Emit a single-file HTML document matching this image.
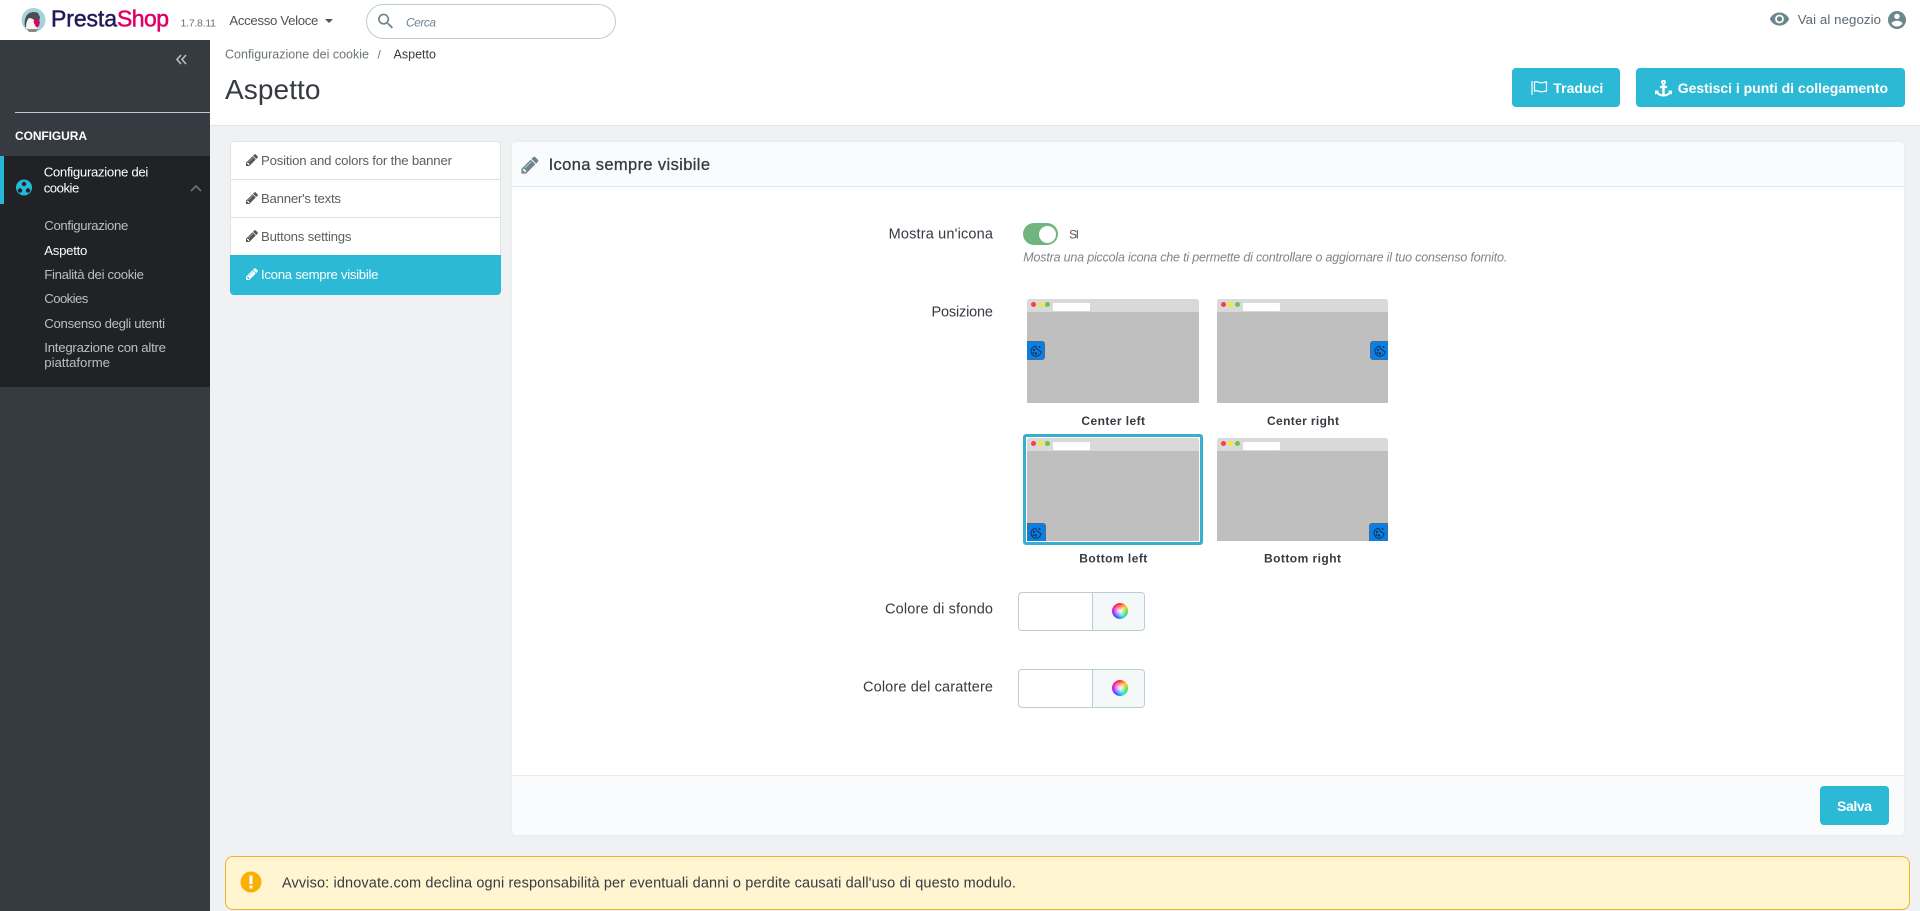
<!DOCTYPE html>
<html lang="it">
<head>
<meta charset="utf-8">
<title>Aspetto • PrestaShop</title>
<style>
html,body{margin:0;padding:0;width:1920px;height:911px;overflow:hidden;background:#eff1f2;font-family:"Liberation Sans",sans-serif}
.b{position:absolute;box-sizing:border-box}
svg.ov{position:absolute;left:0;top:0;width:1920px;height:911px}
svg.ov text{font-family:"Liberation Sans",sans-serif;font-size:13.2px;fill:#363a41}
.sb{font-weight:700}
.wheel{border-radius:50%;background:radial-gradient(circle,rgba(255,255,255,.95) 0,rgba(255,255,255,.55) 30%,rgba(255,255,255,0) 62%),conic-gradient(#ff2d2d,#ffc21a,#49e049,#1fe0d8,#2a5cff,#a51fff,#ff1f8c,#ff2d2d)}
.shot{position:absolute;background:#bfbfbf;border-radius:3px 3px 0 0;overflow:hidden}
.shot .bar{position:absolute;left:0;top:0;right:0;height:13px;background:#d9d9d9}
.shot .tab{position:absolute;left:26px;top:4px;width:37px;height:8px;background:#fff;border-radius:1px}
.shot .dot{position:absolute;top:3px;width:5px;height:5px;border-radius:50%}
.shot .ck{position:absolute;width:19px;height:19px;background:#0a7fe6;border:1px solid #4a6a88;box-sizing:border-box}
</style>
</head>
<body>
<!-- header -->
<div class="b" style="left:0;top:0;width:1920px;height:40px;background:#fff"></div>
<div class="b" style="left:210px;top:40px;width:1710px;height:86px;background:#fff;border-bottom:1px solid #e4e6e8"></div>
<div class="b" style="left:366px;top:4px;width:250px;height:35px;border:1px solid #bbcdd2;border-radius:18px;background:#fff"></div>
<!-- sidebar -->
<div class="b" style="left:0;top:40px;width:210px;height:871px;background:#363a41"></div>
<div class="b" style="left:15px;top:112px;width:195px;height:1px;background:#bbcdd2"></div>
<div class="b" style="left:0;top:156px;width:210px;height:231px;background:#202226"></div>
<div class="b" style="left:0;top:156px;width:4px;height:48px;background:#25b9d7"></div>
<!-- buttons -->
<div class="b" style="left:1512px;top:68px;width:108px;height:39px;background:#2cb9d6;border-radius:4px"></div>
<div class="b" style="left:1636px;top:68px;width:269px;height:39px;background:#2cb9d6;border-radius:4px"></div>
<!-- list -->
<div class="b" style="left:230px;top:141px;width:271px;height:154px;background:#fff;border:1px solid #e2e5e7;border-radius:4px;overflow:hidden">
  <div class="b" style="left:0;top:37px;width:100%;height:1px;background:#dcdfe1"></div>
  <div class="b" style="left:0;top:75px;width:100%;height:1px;background:#dcdfe1"></div>
</div>
<div class="b" style="left:230px;top:255px;width:271px;height:40px;background:#2cb9d6;border-radius:0 0 4px 4px"></div>
<!-- panel -->
<div class="b" style="left:512px;top:142px;width:1392px;height:693px;background:#fff;border-radius:4px;box-shadow:0 0 2px rgba(190,205,210,.35)"></div>
<div class="b" style="left:512px;top:142px;width:1392px;height:45px;background:#fafbfc;border-bottom:1px solid #dfe8ec;border-radius:4px 4px 0 0"></div>
<div class="b" style="left:512px;top:775px;width:1392px;height:60px;background:#fafbfc;border-top:1px solid #e6eaec;border-radius:0 0 4px 4px"></div>
<div class="b" style="left:1820px;top:786px;width:69px;height:39px;background:#2cb9d6;border-radius:4px"></div>
<!-- switch -->
<div class="b" style="left:1023px;top:223px;width:35px;height:22px;border-radius:11px;background:#70b580"></div>
<div class="b" style="left:1039px;top:225.500px;width:17px;height:17px;border-radius:50%;background:#fff"></div>
<!-- thumbs -->
<div class="shot" style="left:1027px;top:299px;width:172px;height:104px"><div class="bar"></div><div class="dot" style="left:4px;background:#f4414a"></div><div class="dot" style="left:11px;background:#f5e82e"></div><div class="dot" style="left:18px;background:#6cc644"></div><div class="tab"></div><div class="ck" style="left:-1px;top:42px;border-radius:0 3px 3px 0"></div></div>
<div class="shot" style="left:1217px;top:299px;width:171px;height:104px"><div class="bar"></div><div class="dot" style="left:4px;background:#f4414a"></div><div class="dot" style="left:11px;background:#f5e82e"></div><div class="dot" style="left:18px;background:#6cc644"></div><div class="tab"></div><div class="ck" style="right:-1px;top:42px;border-radius:3px 0 0 3px"></div></div>
<div class="b" style="left:1023px;top:434px;width:180px;height:111px;border:3px solid #38afcf;border-radius:3px"><div style="position:absolute;inset:0;border:1px solid #fff"></div></div>
<div class="shot" style="left:1027px;top:438px;width:172px;height:103px"><div class="bar"></div><div class="dot" style="left:4px;background:#f4414a"></div><div class="dot" style="left:11px;background:#f5e82e"></div><div class="dot" style="left:18px;background:#6cc644"></div><div class="tab"></div><div class="ck" style="left:0;bottom:-1px;border-radius:0 3px 0 0"></div></div>
<div class="shot" style="left:1217px;top:438px;width:171px;height:103px"><div class="bar"></div><div class="dot" style="left:4px;background:#f4414a"></div><div class="dot" style="left:11px;background:#f5e82e"></div><div class="dot" style="left:18px;background:#6cc644"></div><div class="tab"></div><div class="ck" style="right:0;bottom:-1px;border-radius:3px 0 0 0"></div></div>
<!-- colour inputs -->
<div class="b" style="left:1018px;top:592px;width:127px;height:39px;border:1px solid #bbcdd2;border-radius:4px;background:#fff;overflow:hidden"><div class="b" style="left:73px;top:0;bottom:0;right:0;background:#f4f8f9;border-left:1px solid #bbcdd2"></div></div>
<div class="b wheel" style="left:1112px;top:603px;width:16px;height:16px"></div>
<div class="b" style="left:1018px;top:669px;width:127px;height:39px;border:1px solid #bbcdd2;border-radius:4px;background:#fff;overflow:hidden"><div class="b" style="left:73px;top:0;bottom:0;right:0;background:#f4f8f9;border-left:1px solid #bbcdd2"></div></div>
<div class="b wheel" style="left:1112px;top:680px;width:16px;height:16px"></div>
<!-- warning -->
<div class="b" style="left:225px;top:856px;width:1685px;height:54px;background:#fff5d1;border:1px solid #f9ae27;border-radius:8px"></div>

<svg class="ov" viewBox="0 0 1920 911" xmlns="http://www.w3.org/2000/svg">
<defs>
<path id="pen" d="M491 1536l91-91-235-235-91 91v107h128v128h107zm523-928q0-22-22-22-10 0-17 7l-542 542q-7 7-7 17 0 22 22 22 10 0 17-7l542-542q7-7 7-17zm-54-192l416 416-832 832h-416v-416zm683 96q0 53-37 90l-166 166-416-416 166-165q36-38 90-38 53 0 91 38l235 234q37 39 37 91z"/>
<g id="ck" fill="none" stroke="#12365a" stroke-width="1"><path d="M6 1.200a5 5 0 1 0 5 5.200c-1.400.2-2.200-.6-2.300-1.700-1.300 0-2.500-1.200-2.700-3.500z"/><circle cx="4" cy="5" r=".7" fill="#12365a"/><circle cx="6" cy="8.500" r=".7" fill="#12365a"/><circle cx="3.500" cy="8" r=".5" fill="#12365a"/><circle cx="9.500" cy="2" r=".5" fill="#12365a"/></g>
</defs>

<!-- logo -->
<circle cx="33.500" cy="20" r="12" fill="#a3d4dc"/>
<path d="M25 27c-1-5 0-9 2-12 2-3 8-4 11-2l2 4-2 10z" fill="#4a4d52"/>
<path d="M26 28c0-5 1-8 3-10 3 0 6 2 7 5l1 6-6 1z" fill="#f4f4f2"/>
<path d="M35 18l5 4-1 4-3 1-2.500-5z" fill="#df0067"/>
<path d="M27 29h11l-2 3h-7z" fill="#8f8a7e"/>
<text x="51" y="26.500" textLength="66" style="font-size:23px;fill:#251b5b;stroke:#251b5b;stroke-width:.5">Presta</text>
<text x="117" y="26.500" textLength="52" style="font-size:23px;fill:#df0067;stroke:#df0067;stroke-width:.5">Shop</text>
<text x="180.500" y="26.500" textLength="35.500" style="font-size:10.500px;fill:#6c6f73">1.7.8.11</text>
<text x="229.400" y="25" textLength="89" style="fill:#4e5357">Accesso Veloce</text>
<path d="M325 19h8l-4 4z" fill="#4e5357"/>
<svg x="375.500" y="11" width="20.500" height="20.500" viewBox="0 0 24 24"><path fill="#6c868e" d="M15.500 14h-.79l-.28-.27C15.410 12.590 16 11.110 16 9.500 16 5.910 13.090 3 9.500 3S3 5.910 3 9.500 5.910 16 9.500 16c1.610 0 3.090-.59 4.230-1.570l.27.28v.79l5 4.990L20.490 19l-4.990-5zm-6 0C7.010 14 5 11.990 5 9.500S7.010 5 9.500 5 14 7.010 14 9.500 11.990 14 9.500 14z"/></svg>
<text x="406" y="26.500" textLength="30" style="font-size:12px;font-style:italic;fill:#6c868e">Cerca</text>

<!-- header right -->
<svg x="1769" y="8" width="21" height="22" viewBox="0 0 24 24"><path fill="#6c868e" d="M12 4.500C7 4.500 2.730 7.610 1 12c1.730 4.390 6 7.500 11 7.500s9.270-3.110 11-7.500c-1.730-4.390-6-7.500-11-7.500zM12 17c-2.760 0-5-2.240-5-5s2.240-5 5-5 5 2.240 5 5-2.240 5-5 5zm0-8c-1.660 0-3 1.340-3 3s1.340 3 3 3 3-1.340 3-3-1.340-3-3-3z"/></svg>
<text x="1797.700" y="24" textLength="83.300" style="fill:#5b6770">Vai al negozio</text>
<svg x="1886.200" y="9.200" width="21.600" height="21.600" viewBox="0 0 24 24"><path fill="#6c868e" d="M12 2C6.480 2 2 6.480 2 12s4.480 10 10 10 10-4.480 10-10S17.520 2 12 2zm0 3c1.660 0 3 1.340 3 3s-1.340 3-3 3-3-1.340-3-3 1.340-3 3-3zm0 14.200c-2.500 0-4.710-1.280-6-3.220.03-1.990 4-3.080 6-3.080 1.990 0 5.970 1.090 6 3.080-1.290 1.940-3.500 3.220-6 3.220z"/></svg>

<!-- breadcrumb/title -->
<text x="225" y="58.500" textLength="144" style="font-size:12.500px;fill:#6c7478">Configurazione dei cookie</text>
<text x="377.500" y="58.500" style="font-size:12px;fill:#6c7478">/</text>
<text x="393.500" y="58.500" textLength="42.500" style="font-size:12.500px;fill:#363a41">Aspetto</text>
<text x="225" y="99" textLength="95.500" style="font-size:28px;fill:#363a41">Aspetto</text>

<!-- action buttons -->
<path d="M1532 81v14M1534.500 82c3-1 4 .8 6.500.8s3-.8 5.500-.8v9c-2.500 0-3 .8-5.500.8s-3.500-1.800-6.500-.8z" fill="none" stroke="#fff" stroke-width="1.200"/>
<text x="1553.300" y="93" textLength="50" class="sb" style="font-size:14px;fill:#fff">Traduci</text>
<svg x="1655" y="80" width="17" height="17" viewBox="0 0 1792 1792"><path fill="#fff" d="M960 256q0-26-19-45t-45-19-45 19-19 45 19 45 45 19 45-19 19-45zm832 890v352q0 22-20 30-8 2-12 2-12 0-23-9l-93-93q-119 143-318.500 226.500t-429.500 83.500-429.500-83.500-318.500-226.500l-93 93q-9 9-23 9-4 0-12-2-20-8-20-30v-352q0-14 9-23t23-9h352q22 0 30 20 8 19-7 35l-100 100q67 91 189.500 153.500t271.500 82.500v-647h-192q-26 0-45-19t-19-45v-128q0-26 19-45t45-19h192v-163q-58-34-93-92.500t-35-128.500q0-106 75-181t181-75 181 75 75 181q0 70-35 128.500t-93 92.500v163h192q26 0 45 19t19 45v128q0 26-19 45t-45 19h-192v647q149-20 271.500-82.500t189.500-153.500l-100-100q-15-16-7-35 8-20 30-20h352q14 0 23 9t9 23z"/></svg>
<text x="1677.700" y="93" textLength="210.300" class="sb" style="font-size:14px;fill:#fff">Gestisci i punti di collegamento</text>

<!-- sidebar -->
<path d="M181 55l-4 4.500 4 4.500M186 55l-4 4.500 4 4.500" fill="none" stroke="#bebebe" stroke-width="1.600"/>
<text x="15" y="140" textLength="72" class="sb" style="font-size:12px;fill:#fff">CONFIGURA</text>
<circle cx="24" cy="187.500" r="8" fill="#25b9d7"/>
<circle cx="24" cy="184" r="2.200" fill="#202226"/><circle cx="20" cy="190.500" r="2.200" fill="#202226"/><circle cx="28" cy="190.500" r="2.200" fill="#202226"/>
<text x="43.700" y="176.700" textLength="104.600" style="fill:#fff">Configurazione dei</text>
<text x="43.700" y="192.700" textLength="35.600" style="fill:#fff">cookie</text>
<path d="M191 191l5-5 5 5" fill="none" stroke="#6c7278" stroke-width="1.600"/>
<text x="44.300" y="230" textLength="84" style="fill:#bebebe">Configurazione</text>
<text x="44.300" y="255" textLength="43" style="fill:#fff">Aspetto</text>
<text x="44.300" y="279" textLength="99.700" style="fill:#bebebe">Finalità dei cookie</text>
<text x="44.300" y="303" textLength="44" style="fill:#bebebe">Cookies</text>
<text x="44.300" y="328" textLength="120.700" style="fill:#bebebe">Consenso degli utenti</text>
<text x="44.300" y="352" textLength="121.700" style="fill:#bebebe">Integrazione con altre</text>
<text x="44.300" y="367" textLength="65.700" style="fill:#bebebe">piattaforme</text>

<!-- list -->
<svg x="245" y="153" width="14" height="14" viewBox="0 0 1792 1792"><use href="#pen" fill="#555"/></svg>
<text x="261" y="164.800" textLength="191" style="fill:#5a5f63">Position and colors for the banner</text>
<svg x="245" y="191" width="14" height="14" viewBox="0 0 1792 1792"><use href="#pen" fill="#555"/></svg>
<text x="261" y="202.800" textLength="80" style="fill:#5a5f63">Banner's texts</text>
<svg x="245" y="229" width="14" height="14" viewBox="0 0 1792 1792"><use href="#pen" fill="#555"/></svg>
<text x="261" y="240.800" textLength="90.500" style="fill:#5a5f63">Buttons settings</text>
<svg x="245" y="267" width="14" height="14" viewBox="0 0 1792 1792"><use href="#pen" fill="#fff"/></svg>
<text x="261" y="278.800" textLength="117.500" style="fill:#fff">Icona sempre visibile</text>

<!-- panel heading -->
<svg x="520" y="155" width="20" height="20" viewBox="0 0 1792 1792"><use href="#pen" fill="#6c868e"/></svg>
<text x="548.600" y="169.800" textLength="161.400" style="font-size:16.500px;fill:#363a41;stroke:#363a41;stroke-width:.3">Icona sempre visibile</text>

<!-- form -->
<text x="888.600" y="238.300" textLength="104.400" style="font-size:14.500px">Mostra un'icona</text>
<text x="1069" y="238.500" textLength="10" style="font-size:12px;fill:#555">SI</text>
<text x="1023.300" y="261.700" textLength="484" style="font-size:12.500px;font-style:italic;fill:#7d8589">Mostra una piccola icona che ti permette di controllare o aggiornare il tuo consenso fornito.</text>
<text x="931.500" y="316.700" textLength="61.500" style="font-size:14.500px">Posizione</text>
<text x="885" y="613.500" textLength="108" style="font-size:14.500px">Colore di sfondo</text>
<text x="863" y="691.500" textLength="130" style="font-size:14.500px">Colore del carattere</text>

<text x="1081.400" y="425" textLength="63.600" class="sb" style="font-size:12px">Center left</text>
<text x="1267" y="425" textLength="72" class="sb" style="font-size:12px">Center right</text>
<text x="1079.300" y="562.700" textLength="68" class="sb" style="font-size:12px">Bottom left</text>
<text x="1264" y="562.700" textLength="77" class="sb" style="font-size:12px">Bottom right</text>

<use href="#ck" x="1030" y="345"/>
<use href="#ck" x="1374" y="345"/>
<use href="#ck" x="1030" y="527"/>
<use href="#ck" x="1373" y="527"/>

<text x="1837" y="811" textLength="35" class="sb" style="font-size:14px;fill:#fff">Salva</text>

<!-- warning -->
<circle cx="251" cy="882" r="10.500" fill="#fab000"/>
<path d="M249.500 875.500h3v8.500h-3zM249.500 885.500h3v3h-3z" fill="#fff"/>
<text x="282" y="887.700" textLength="734" style="font-size:14.500px">Avviso: idnovate.com declina ogni responsabilità per eventuali danni o perdite causati dall'uso di questo modulo.</text>
</svg>
</body>
</html>
